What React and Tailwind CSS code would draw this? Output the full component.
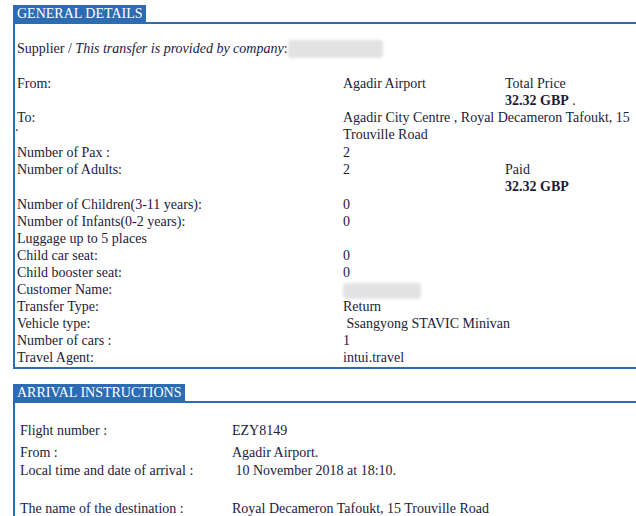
import React from 'react';

const BLUE = 'border-[#2b6cb3]';

const SectionTab = ({ children }) => (
  <div className="w-fit bg-[#2b6cb3] text-white pl-[4px] pr-[3px] h-[17px] leading-[17px] text-[14px]">
    {children}
  </div>
);

const Blur = ({ w, h = 'h-[18px]' }) => (
  <span className={`inline-block align-middle ${w} ${h} bg-[#e2e2e2] blur-[1.5px] rounded-sm`} />
);

const Row = ({ label, value, extra, className = '' }) => (
  <div className={`grid grid-cols-[326px_162px_1fr] h-[17px] leading-[17px] ${className}`}>
    <div>{label}</div>
    <div className="whitespace-pre">{value}</div>
    <div>{extra}</div>
  </div>
);

const ArrRow = ({ label, value, className = '' }) => (
  <div className={`grid grid-cols-[212px_1fr] h-[17px] leading-[17px] ${className}`}>
    <div>{label}</div>
    <div className="whitespace-pre">{value}</div>
  </div>
);

export default function App() {
  return (
    <div className="w-[636px] h-[516px] overflow-hidden bg-white text-[14px] text-[#1b1b3d] [font-family:'Liberation_Serif','Times_New_Roman',serif]">
      <div className="pt-[5px] pl-[13px]">
        <SectionTab>GENERAL DETAILS</SectionTab>
        <div className={`border-t-2 border-l-2 border-b-2 ${BLUE} pl-[2px] pt-[16px] pb-[1px]`}>
          <div className="h-[18px] leading-[18px] flex items-center">
            <span>Supplier / <i>This transfer is provided by company</i>:</span>
            <Blur w="w-[95px]" />
          </div>
          <Row className="mt-[17px]" label="From:" value="Agadir Airport" extra="Total Price" />
          <Row label="" value="" extra={<><b>32.32 GBP</b> .</>} />
          <div className="grid grid-cols-[326px_1fr] leading-[17px]">
            <div>To:<br /><span className="-ml-[2px] relative -top-[8px]">.</span></div>
            <div>Agadir City Centre , Royal Decameron Tafoukt, 15<br />Trouville Road</div>
          </div>
          <Row className="mt-[1px]" label="Number of Pax :" value="2" />
          <Row label="Number of Adults:" value="2" extra="Paid" />
          <Row label="" value="" extra={<b>32.32 GBP</b>} />
          <Row className="mt-[1px]" label="Number of Children(3-11 years):" value="0" />
          <Row label="Number of Infants(0-2 years):" value="0" />
          <Row label="Luggage up to 5 places" value="" />
          <Row label="Child car seat:" value="0" />
          <Row label="Child booster seat:" value="0" />
          <Row label="Customer Name:" value={<Blur w="w-[78px]" h="h-[16px]" />} />
          <Row label="Transfer Type:" value="Return" />
          <Row label="Vehicle type:" value=" Ssangyong STAVIC Minivan" />
          <Row label="Number of cars :" value="1" />
          <Row label="Travel Agent:" value="intui.travel" />
        </div>
      </div>

      <div className="pt-[15px] pl-[13px]">
        <SectionTab>ARRIVAL INSTRUCTIONS</SectionTab>
        <div className={`border-t-2 border-l-2 ${BLUE} pl-[5px] pt-[19px]`}>
          <ArrRow label="Flight number :" value="EZY8149" />
          <ArrRow className="mt-[5px]" label="From :" value="Agadir Airport." />
          <ArrRow className="mt-[1px]" label="Local time and date of arrival :" value=" 10 November 2018 at 18:10." />
          <ArrRow className="mt-[21px]" label="The name of the destination :" value="Royal Decameron Tafoukt, 15 Trouville Road" />
        </div>
      </div>
    </div>
  );
}
